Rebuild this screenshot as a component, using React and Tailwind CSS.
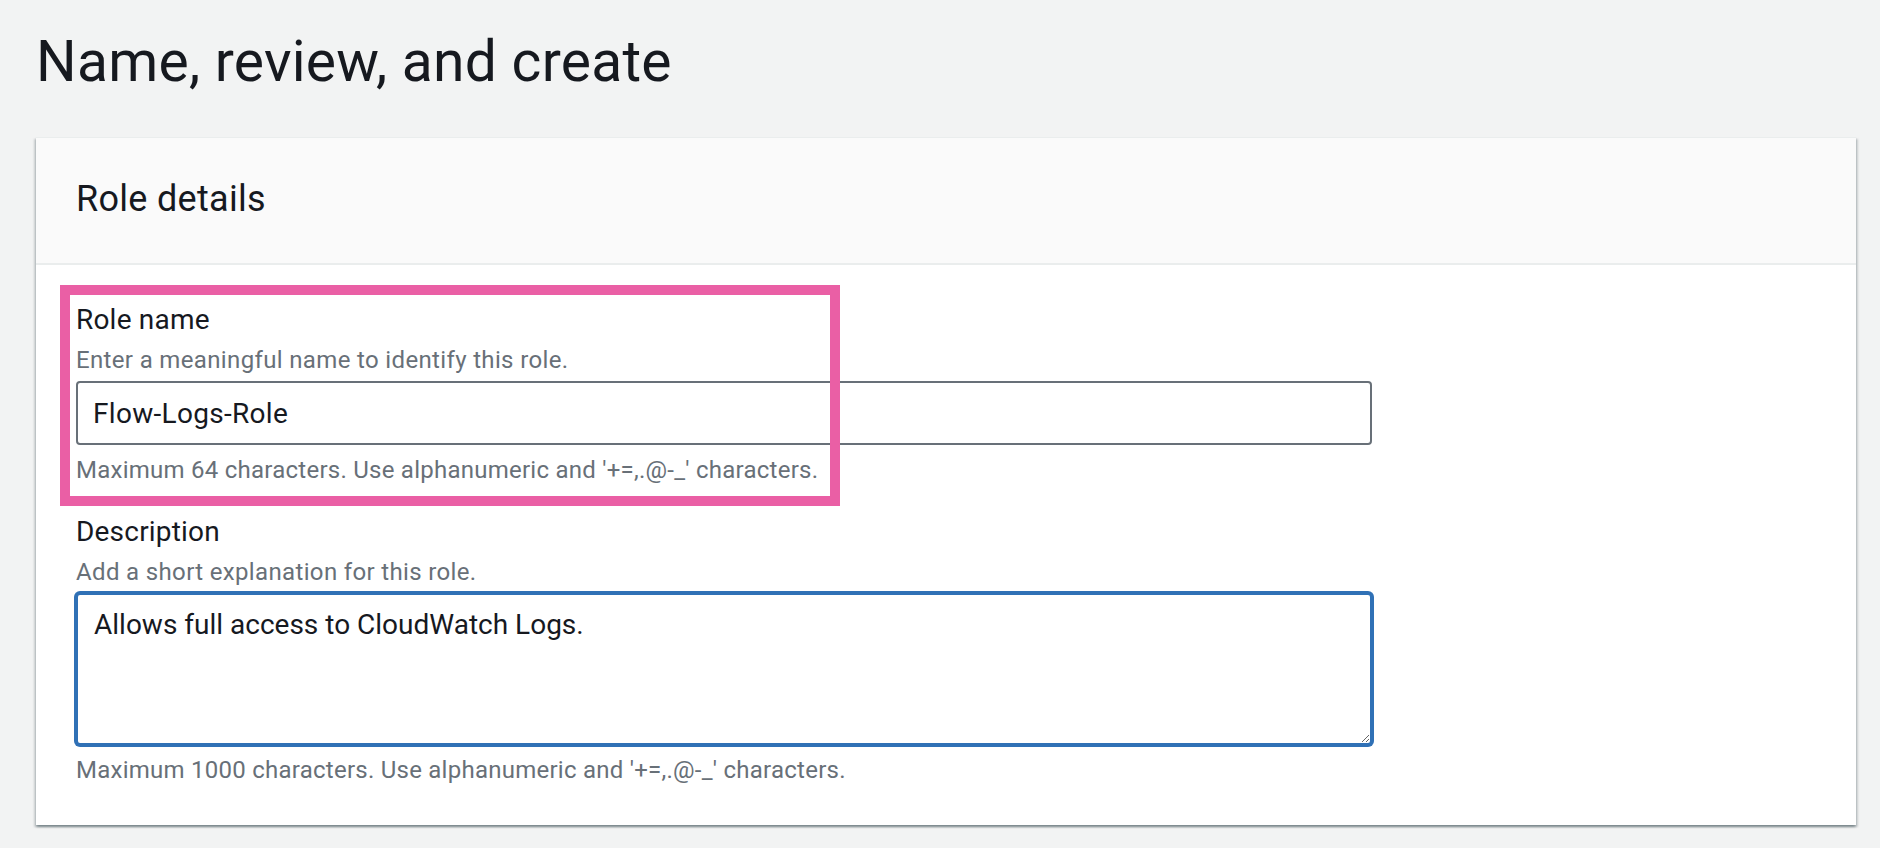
import React from "react";

function Field({ label, description, constraint, children }) {
  return (
    <div className="flex flex-col">
      <label className="text-[28px] leading-[40px] tracking-[0.2px] text-[#16191f]">{label}</label>
      <div className="mt-[4px] text-[24px] leading-[32px] tracking-[0.35px] text-[#687078]">{description}</div>
      <div className="mt-[5px]">{children}</div>
      <div className="mt-[9px] text-[24px] leading-[32px] tracking-[0.25px] text-[#687078]">{constraint}</div>
    </div>
  );
}

export default function App() {
  return (
    <div className="min-h-[848px] bg-[#f2f3f3] pl-[36px] pr-[24px] pt-[27px] font-['Roboto',sans-serif] text-[#16191f]">
      <h1 className="text-[57px] leading-[70px] tracking-[0.25px] font-normal">Name, review, and create</h1>

      <div className="mt-[40px] bg-white border-t border-[#eaeded] shadow-[0_2px_2px_0_rgba(0,28,36,0.3),2px_2px_2px_0_rgba(0,28,36,0.15),-2px_2px_2px_0_rgba(0,28,36,0.15)]">
        <div className="bg-[#fafafa] border-b-2 border-[#eaeded] px-[40px] pt-[39px] pb-[42px]">
          <h2 className="text-[36px] leading-[44px] tracking-[0.3px] font-normal">Role details</h2>
        </div>

        <div className="relative px-[40px] pt-[35px] pb-[39px] flex flex-col gap-[26px]">
          <Field
            label="Role name"
            description="Enter a meaningful name to identify this role."
            constraint="Maximum 64 characters. Use alphanumeric and '+=,.@-_' characters."
          >
            <input
              readOnly
              value="Flow-Logs-Role"
              className="w-[1296px] h-[64px] border-2 border-[#687078] rounded-[4px] px-[15px] text-[28px] tracking-[0.3px] text-[#16191f] bg-white outline-none font-['Roboto',sans-serif]"
            />
          </Field>

          <Field
            label="Description"
            description="Add a short explanation for this role."
            constraint="Maximum 1000 characters. Use alphanumeric and '+=,.@-_' characters."
          >
            <textarea
              readOnly
              value="Allows full access to CloudWatch Logs."
              className="block w-[1296px] h-[152px] border-2 border-[#3071b6] shadow-[0_0_0_2px_#3071b6] rounded-[4px] px-[16px] pt-[10px] text-[28px] leading-[40px] text-[#16191f] bg-white outline-none resize-y font-['Roboto',sans-serif]"
            />
          </Field>

          <div className="absolute left-[24px] top-[20px] w-[780px] h-[221px] border-[10px] border-[#ea5fa5] pointer-events-none" />
        </div>
      </div>
    </div>
  );
}
